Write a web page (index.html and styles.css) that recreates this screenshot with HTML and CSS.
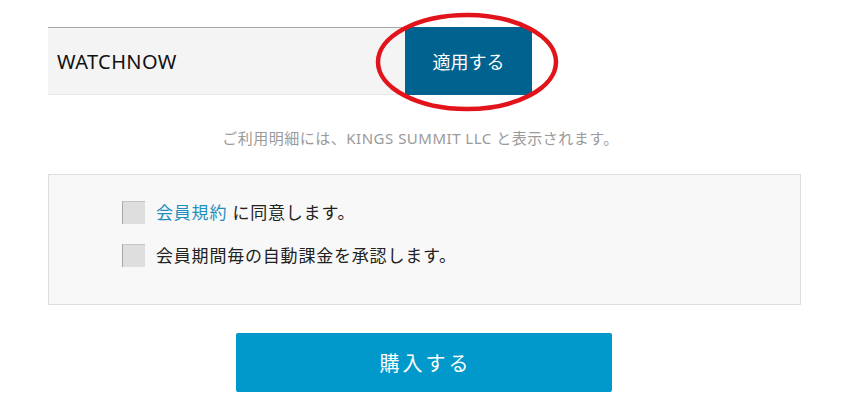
FILE: index.html
```html
<!DOCTYPE html>
<html lang="ja">
<head>
<meta charset="utf-8">
<link rel="stylesheet" href="styles.css">
</head>
<body>
<div class="wrap">
  <div class="coupon">
    <div class="coupon-input">WATCHNOW</div>
    <button class="apply">適用する</button>
    <svg class="circle" width="186" height="102" viewBox="0 0 186 102">
      <ellipse cx="93" cy="51" rx="89" ry="47" fill="none" stroke="#e3131c" stroke-width="4.5"/>
    </svg>
  </div>
  <p class="note">ご利用明細には、KINGS SUMMIT LLC と表示されます。</p>
  <div class="agree">
    <label class="row"><span class="box"></span><span><a class="link">会員規約</a> に同意します。</span></label>
    <label class="row"><span class="box"></span><span>会員期間毎の自動課金を承認します。</span></label>
  </div>
  <div class="buy-wrap">
    <button class="buy">購入する</button>
  </div>
</div>
</body>
</html>
```
FILE: styles.css
```css
html, body {
  margin: 0;
  padding: 0;
  background: #fff;
}
body {
  font-family: "Noto Sans", "Noto Sans CJK JP", sans-serif;
  color: #222;
}
.wrap {
  width: 753px;
  margin-left: 48px;
  padding-top: 27px;
}
.coupon {
  position: relative;
  display: flex;
  height: 68px;
}
.coupon-input {
  flex: 1;
  display: flex;
  align-items: center;
  padding-left: 9px;
  background: #f4f4f4;
  border-top: 1px solid #a9a9a9;
  border-bottom: 1px solid #e6e6e6;
  font-size: 20px;
  letter-spacing: 0.4px;
  color: #111;
  box-sizing: border-box;
}
.apply {
  width: 127px;
  margin-right: 269px;
  border: 0;
  background: #00628f;
  color: #fff;
  font-family: inherit;
  font-size: 18px;
  padding: 0;
}
.circle {
  position: absolute;
  left: 326px;
  top: -16px;
}
.note {
  margin: 33px 0 0;
  text-align: center;
  font-size: 15px;
  letter-spacing: 0.5px;
  color: #9a9a9a;
  line-height: 20px;
  padding-right: 8px;
}
.agree {
  margin-top: 26px;
  height: 131px;
  box-sizing: border-box;
  background: #f8f8f8;
  border: 1px solid #dedede;
  padding: 26px 0 0 73px;
  display: flex;
  flex-direction: column;
  gap: 20px;
}
.row {
  display: flex;
  align-items: center;
  gap: 11px;
  font-size: 17px;
  letter-spacing: 0.8px;
  line-height: 23px;
  color: #222;
}
.box {
  width: 23px;
  height: 23px;
  box-sizing: border-box;
  background: #dedede;
  border-left: 1px solid #a8a8a8;
  border-top: 1px solid #c4c4c4;
  flex: none;
}
.link {
  color: #1e8fbd;
}
.buy-wrap {
  display: flex;
  justify-content: center;
  margin-top: 28px;
  padding-right: 1px;
}
.buy {
  width: 376px;
  height: 59px;
  border: 0;
  border-radius: 2px;
  background: #0199cb;
  color: #fff;
  font-family: inherit;
  font-size: 20px;
  letter-spacing: 3px;
  padding: 0 0 0 3px;
  box-shadow: 0 3px 1px -1px #c2cbd2;
}
```
